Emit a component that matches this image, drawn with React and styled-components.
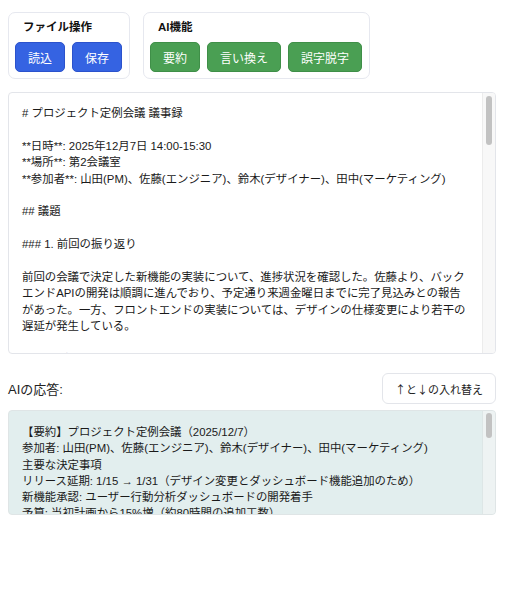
import React from "react";
import styled, { createGlobalStyle } from "styled-components";

const GlobalStyle = createGlobalStyle`
  html, body {
    margin: 0;
    padding: 0;
    background: #ffffff;
    font-family: "Liberation Sans", "Noto Sans CJK JP", sans-serif;
    color: #222;
  }
`;

const Page = styled.div`
  padding: 12px 8px 20px;
  width: 488px;
`;

const Toolbar = styled.div`
  display: flex;
  gap: 13px;
  align-items: flex-start;
`;

const Group = styled.div`
  border: 1px solid #e6e8ef;
  border-radius: 7px;
  padding: 6px 7px 6px 6px;
  background: #fff;
`;

const GroupTitle = styled.div`
  font-size: 11.5px;
  font-weight: bold;
  line-height: 16px;
  margin: 0 0 7px 8px;
  color: #111;
`;

const ButtonRow = styled.div`
  display: flex;
  gap: 7px;
`;

const ActionButton = styled.button`
  height: 30px;
  padding: 0 12px;
  border-radius: 5px;
  border: 1px solid ${(props) => (props.kind === "ai" ? "#3f8f48" : "#2b52cc")};
  background: ${(props) => (props.kind === "ai" ? "#4a9f53" : "#3563e2")};
  color: #fff;
  font-family: "Liberation Sans", "Noto Sans CJK JP", sans-serif;
  font-size: 12px;
  cursor: pointer;
`;

// テキストエリア + 疑似スクロールバー
const EditorFrame = styled.div`
  display: flex;
  margin-top: 13px;
  height: 262px;
  box-sizing: border-box;
  border: 1px solid #e3e5ea;
  border-radius: 4px;
  overflow: hidden;
  background: #fff;
`;

const Editor = styled.textarea`
  flex: 1;
  min-width: 0;
  box-sizing: border-box;
  padding: 12px 13px;
  border: none;
  resize: none;
  overflow: hidden;
  font-family: "Liberation Sans", "Noto Sans CJK JP", sans-serif;
  font-size: 11.4px;
  line-height: 16.4px;
  color: #1a1a1a;
  background: transparent;
  outline: none;
`;

const ScrollTrack = styled.div`
  flex: 0 0 12px;
  display: flex;
  justify-content: center;
  background: ${(props) => props.bg || "#f8f8f8"};
  border-left: 1px solid ${(props) => props.line || "#ececec"};
`;

const ScrollThumb = styled.div`
  margin-top: ${(props) => props.top}px;
  width: 6px;
  height: ${(props) => props.size}px;
  border-radius: 3px;
  background: #c2c2c2;
`;

const ResponseHeader = styled.div`
  margin-top: 19px;
  display: flex;
  align-items: center;
  justify-content: space-between;
`;

const ResponseLabel = styled.span`
  font-size: 13px;
  color: #222;
`;

const SwapButton = styled.button`
  height: 31px;
  width: 114px;
  border: 1px solid #e3e5ea;
  border-radius: 6px;
  background: #fff;
  color: #222;
  font-family: "Noto Sans CJK JP", "Liberation Sans", sans-serif;
  font-size: 11px;
  cursor: pointer;
`;

const ResponseFrame = styled.div`
  display: flex;
  margin-top: 6px;
  height: 105px;
  box-sizing: border-box;
  border: 1px solid #dfe5e6;
  border-radius: 4px;
  overflow: hidden;
  background: #e2eeee;
`;

const ResponseText = styled.div`
  flex: 1;
  min-width: 0;
  overflow: hidden;
  padding: 13px 10px 13px 13px;
  font-size: 11.4px;
  line-height: 16.3px;
  white-space: pre-wrap;
  color: #1a1a1a;
`;

const minutes = `# プロジェクト定例会議 議事録

**日時**: 2025年12月7日 14:00-15:30
**場所**: 第2会議室
**参加者**: 山田(PM)、佐藤(エンジニア)、鈴木(デザイナー)、田中(マーケティング)

## 議題

### 1. 前回の振り返り

前回の会議で決定した新機能の実装について、進捗状況を確認した。佐藤より、バックエンドAPIの開発は順調に進んでおり、予定通り来週金曜日までに完了見込みとの報告があった。一方、フロントエンドの実装については、デザインの仕様変更により若干の遅延が発生している。

### 2. デザイン変更について

鈴木より、ユーザーテストの結果を踏まえたデザイン変更案が提示された。主な変更点は、ナビゲーションメニューの配置変更と、ダッシュボード画面のレイアウト改善である。参加者全員で検討した結果、変更案を採用することで合意した。

### 3. スケジュールの見直し

デザイン変更とダッシュボード機能の追加に伴い、リリース日を1月15日から1月31日に延期することを決定した。

### 4. 新機能の提案

田中より、ユーザー行動分析ダッシュボードの開発が提案され、承認された。

### 5. 予算について

当初計画から約15%の予算増（約80時間の追加工数）が見込まれる。
`;

const summary = `【要約】プロジェクト定例会議（2025/12/7）
参加者: 山田(PM)、佐藤(エンジニア)、鈴木(デザイナー)、田中(マーケティング)
主要な決定事項
リリース延期: 1/15 → 1/31（デザイン変更とダッシュボード機能追加のため）
新機能承認: ユーザー行動分析ダッシュボードの開発着手
予算: 当初計画から15%増（約80時間の追加工数）
次回アクション
山田: 関係部署への周知（本日中）
佐藤: バックエンドAPI完成（来週金曜日）`;

const App = () => {
  return (
    <>
      <GlobalStyle />
      <Page>
        <Toolbar>
          <Group>
            <GroupTitle>ファイル操作</GroupTitle>
            <ButtonRow>
              <ActionButton>読込</ActionButton>
              <ActionButton>保存</ActionButton>
            </ButtonRow>
          </Group>
          <Group>
            <GroupTitle>AI機能</GroupTitle>
            <ButtonRow>
              <ActionButton kind="ai">要約</ActionButton>
              <ActionButton kind="ai">言い換え</ActionButton>
              <ActionButton kind="ai">誤字脱字</ActionButton>
            </ButtonRow>
          </Group>
        </Toolbar>

        <EditorFrame>
          <Editor defaultValue={minutes} spellCheck={false} />
          <ScrollTrack>
            <ScrollThumb top={3} size={49} />
          </ScrollTrack>
        </EditorFrame>

        <ResponseHeader>
          <ResponseLabel>AIの応答:</ResponseLabel>
          <SwapButton>↑と↓の入れ替え</SwapButton>
        </ResponseHeader>

        <ResponseFrame>
          <ResponseText>{summary}</ResponseText>
          <ScrollTrack bg="#eef3f3" line="#dde6e6">
            <ScrollThumb top={2} size={25} />
          </ScrollTrack>
        </ResponseFrame>
      </Page>
    </>
  );
};

export default App;
